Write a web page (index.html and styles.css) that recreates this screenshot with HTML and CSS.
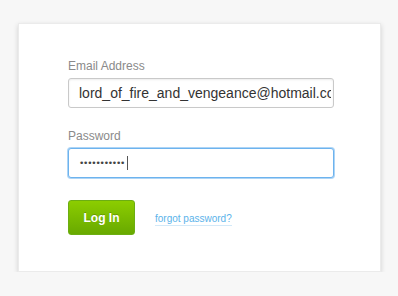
FILE: index.html
```html
<!DOCTYPE html>
<html>
<head>
<meta charset="utf-8">
<link rel="stylesheet" href="styles.css">
</head>
<body>
<div class="card">
  <div class="field">
    <label class="label" for="email">Email Address</label>
    <input class="input value" id="email" type="text" value="lord_of_fire_and_vengeance@hotmail.com">
  </div>
  <div class="field">
    <div class="label">Password</div>
    <div class="input focus"><span class="dots">•••••••••••</span><span class="caret"></span></div>
  </div>
  <div class="actions">
    <button class="btn">Log In</button>
    <a class="link" href="#">forgot password?</a>
  </div>
</div>
</body>
</html>
```
FILE: styles.css
```css
html, body {
  margin: 0;
  padding: 0;
  background: #f7f7f7;
  font-family: "Liberation Sans", Arial, sans-serif;
}
body {
  padding: 23px 0 0 18px;
}
.card {
  box-sizing: border-box;
  width: 363px;
  height: 249px;
  background: #fff;
  border: 1px solid #ebebeb;
  box-shadow: 0 2px 5px rgba(0, 0, 0, 0.16);
  padding: 35px 46px 0 49px;
}
.field {
  margin-bottom: 21px;
}
.label {
  display: block;
  font-size: 12px;
  line-height: 15px;
  color: #8a8a8a;
  margin-bottom: 4px;
}
.input {
  box-sizing: border-box;
  height: 30px;
  width: 266px;
  margin: 0;
  border: 1px solid #c9c9c9;
  border-radius: 3px;
  box-shadow: inset 0 1px 2px rgba(0, 0, 0, 0.08);
  padding: 0 2px 0 10px;
  display: flex;
  align-items: center;
  overflow: hidden;
  white-space: nowrap;
  background: #fff;
  outline: none;
}
.value {
  font-family: "Liberation Sans", Arial, sans-serif;
  font-size: 14px;
  color: #333;
}
.focus {
  border: 1px solid #6db3ee;
  box-shadow: 0 0 0 1px rgba(120, 185, 240, 0.6);
}
.dots {
  font-family: "DejaVu Sans", sans-serif;
  font-size: 9px;
  letter-spacing: -1.2px;
  color: #444;
}
.caret {
  display: inline-block;
  width: 1px;
  height: 14px;
  background: #555;
  margin-left: 3px;
}
.actions {
  display: flex;
  align-items: center;
  margin-top: 22px;
}
.btn {
  box-sizing: border-box;
  width: 67px;
  height: 35px;
  border: 1px solid #6cae12;
  border-radius: 3px;
  background: linear-gradient(#8ccd00, #68a900);
  color: #fff;
  font-family: "Liberation Sans", Arial, sans-serif;
  font-weight: bold;
  font-size: 12px;
  text-shadow: 0 -1px 0 rgba(0, 0, 0, 0.2);
  padding: 0;
}
.link {
  margin-left: 20px;
  font-size: 10px;
  color: #5bb3ea;
  text-decoration: none;
  border-bottom: 1px solid #d3e9f8;
  padding-bottom: 1px;
  margin-top: 3px;
}
```
